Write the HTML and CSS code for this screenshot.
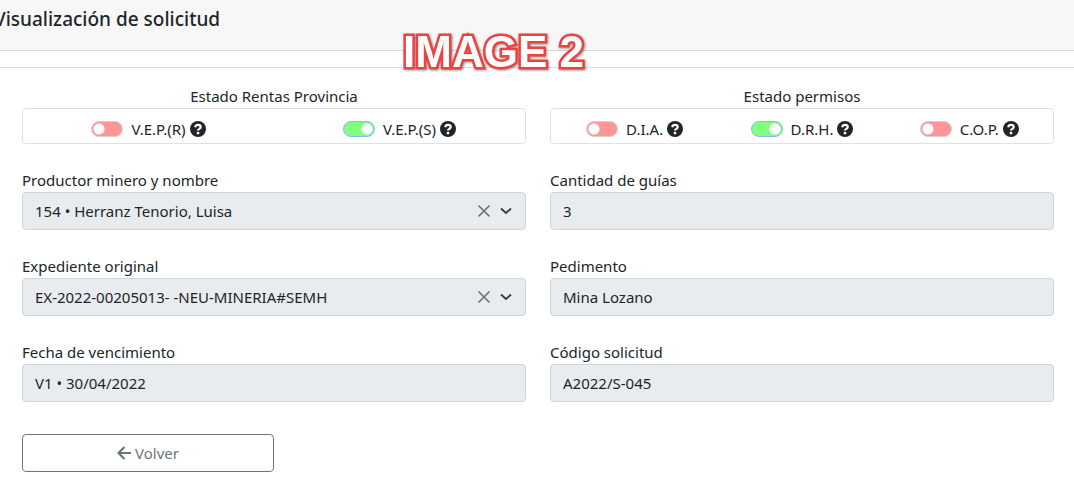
FILE: index.html
```html
<!DOCTYPE html>
<html lang="es">
	<head>
		<meta charset="utf-8">
		<meta name="viewport" content="width=device-width, initial-scale=1">
		<title>Visualización de solicitud</title>
		<link rel="stylesheet" href="styles.css">
	</head>
	<body>
		<svg class="sprite" aria-hidden="true">
			<symbol id="help" viewBox="0 0 16 16">
				<circle cx="8" cy="8" r="8" fill="#212529"/>
				<path d="M5.200 6.200C5.500 4.600 6.500 3.900 8 3.900c1.500 0 2.700.9 2.700 2.200C10.700 7.900 8 7.800 8 9.600" fill="none" stroke="#fff" stroke-width="2.200"/>
				<circle cx="8" cy="12.100" r="1.400" fill="#fff"/>
			</symbol>
			<symbol id="clear" viewBox="0 0 14 14">
				<path d="M1.500 1.500l11 11M12.500 1.500l-11 11" fill="none" stroke="#6c7074" stroke-width="1.600"/>
			</symbol>
			<symbol id="arrow" viewBox="0 0 12 12">
				<path d="M1 3.500l5 4.500 5-4.500" fill="none" stroke="#343a40" stroke-width="1.800"/>
			</symbol>
		</svg>
		<header class="header">
			<h1>Visualización de solicitud</h1>
			<span class="stamp">IMAGE 2</span>
		</header>
		<hr class="line">
		<main class="content">
			<div class="grid">
				<fieldset class="group">
					<legend>Estado Rentas Provincia</legend>
					<div class="switches">
						<label><input type="checkbox" class="switch"><span>V.E.P.(R)</span><svg class="help"><use href="#help"/></svg></label>
						<label><input type="checkbox" class="switch" checked><span>V.E.P.(S)</span><svg class="help"><use href="#help"/></svg></label>
					</div>
				</fieldset>
				<fieldset class="group">
					<legend>Estado permisos</legend>
					<div class="switches">
						<label><input type="checkbox" class="switch"><span>D.I.A.</span><svg class="help"><use href="#help"/></svg></label>
						<label><input type="checkbox" class="switch" checked><span>D.R.H.</span><svg class="help"><use href="#help"/></svg></label>
						<label><input type="checkbox" class="switch"><span>C.O.P.</span><svg class="help"><use href="#help"/></svg></label>
					</div>
				</fieldset>
				<div class="field">
					<label for="productor">Productor minero y nombre</label>
					<div class="control">
						<select id="productor" disabled>
							<option>154 • Herranz Tenorio, Luisa</option>
						</select>
						<button type="button" class="clear" aria-label="Limpiar" disabled><svg><use href="#clear"/></svg></button>
						<svg class="arrow" aria-hidden="true"><use href="#arrow"/></svg>
					</div>
				</div>
				<div class="field">
					<label for="cantidad">Cantidad de guías</label>
					<div class="control">
						<input type="text" id="cantidad" value="3" disabled>
					</div>
				</div>
				<div class="field">
					<label for="expediente">Expediente original</label>
					<div class="control">
						<select id="expediente" disabled>
							<option>EX-2022-00205013- -NEU-MINERIA#SEMH</option>
						</select>
						<button type="button" class="clear" aria-label="Limpiar" disabled><svg><use href="#clear"/></svg></button>
						<svg class="arrow" aria-hidden="true"><use href="#arrow"/></svg>
					</div>
				</div>
				<div class="field">
					<label for="pedimento">Pedimento</label>
					<div class="control">
						<input type="text" id="pedimento" value="Mina Lozano" disabled>
					</div>
				</div>
				<div class="field">
					<label for="fecha">Fecha de vencimiento</label>
					<div class="control">
						<input type="text" id="fecha" value="V1 • 30/04/2022" disabled>
					</div>
				</div>
				<div class="field">
					<label for="codigo">Código solicitud</label>
					<div class="control">
						<input type="text" id="codigo" value="A2022/S-045" disabled>
					</div>
				</div>
			</div>
			<button type="button" class="back">
				<svg viewBox="0 0 14 14" aria-hidden="true"><path d="M7.500 1L1.500 7l6 6M2 7h12" fill="none" stroke="currentColor" stroke-width="2.200"/></svg>
				<span>Volver</span>
			</button>
		</main>
	</body>
</html>
```
FILE: styles.css
```css
*{margin:0;padding:0;box-sizing:border-box;}
body{font-family:"Noto Sans","Open Sans",sans-serif;font-size:15px;line-height:24px;color:#212529;background:#fff;overflow-x:hidden;}
input,select,button{font:inherit;color:inherit;}
.sprite{display:none;}

/* header */
.header{position:relative;padding:7px 0 19px;background:#f7f7f7;border-bottom:1px solid #d8d8d8;}
.header h1{margin-left:-6px;font-size:19px;line-height:24px;font-weight:500;}
.stamp{position:absolute;left:403px;top:28px;font:bold 44px/48px "Liberation Sans",Arial,sans-serif;color:#fff;-webkit-text-stroke:5px #f04040;stroke-linejoin:round;paint-order:stroke fill;filter:drop-shadow(1px 1px 1px rgba(0,0,0,.4));white-space:nowrap;}
.line{margin-top:16px;border:0;border-top:1px solid #dedfe0;}

/* form */
.content{padding:16px 20px 16px 22px;}
.grid{display:grid;grid-template-columns:1fr 1fr;gap:24px;}
.group{border:0;min-width:0;}
.group legend{width:100%;text-align:center;}
.switches{display:flex;height:36px;padding:4px 0 0;border:1px solid #dee2e6;border-radius:4px;}
.switches label{flex:1;display:flex;justify-content:center;align-items:center;height:32px;}
.switch{appearance:none;width:32px;height:16px;margin-right:8px;border:1px solid #d5cfd1;border-radius:8px;background:radial-gradient(circle at 7px 7px,#fff 5px,transparent 6px) #ff9696;}
.switch:checked{border-color:#86b7fe;background:radial-gradient(circle at 23px 7px,#fff 5px,transparent 6px) #80ff80;}
.help{width:16px;height:16px;margin-left:4px;}
.field label{display:block;}
.control{display:flex;align-items:center;height:38px;padding:0 12px;background:#e9ecef;border:1px solid #ced4da;border-radius:4px;}
.control input,.control select{flex:1;min-width:0;appearance:none;border:0;background:none;color:#212529;opacity:1;}
.clear{display:flex;margin-right:8px;border:0;background:none;}
.clear svg{width:14px;height:14px;}
.arrow{width:14px;height:12px;}
.back{display:flex;align-items:center;justify-content:center;gap:4px;width:calc(25% - 6px);height:38px;margin-top:32px;color:#6c757d;background:#fff;border:1px solid #6c757d;border-radius:4px;}
.back svg{width:14px;height:14px;}
```
